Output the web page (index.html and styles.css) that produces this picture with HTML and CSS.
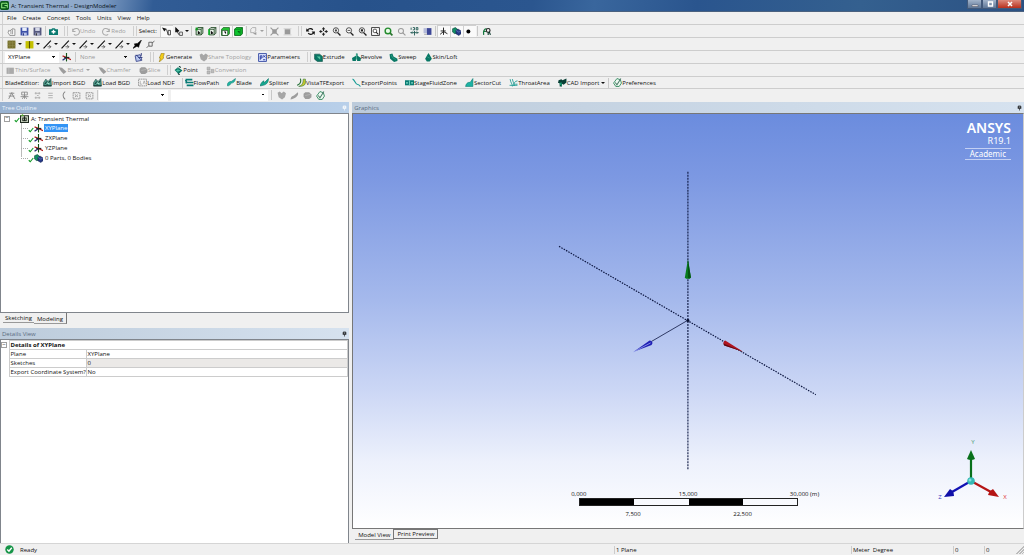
FILE: index.html
```html
<!DOCTYPE html>
<html lang="en">
<head>
<meta charset="utf-8">
<title>A: Transient Thermal - DesignModeler</title>
<link rel="stylesheet" href="styles.css">
</head>
<body>
<svg class="defs" aria-hidden="true">
  <symbol id="new" viewBox="0 0 16 16"><path d="M3 6l2 1 5-4 4 1v11H5l-3-5zM7 6v7M10 4v9" fill="#fff" stroke="#777" stroke-width="1.3"/></symbol>
  <symbol id="save" viewBox="0 0 16 16"><path d="M1 1h14v14H1z" fill="#3c50a8"/><path d="M4 1h8v6H4z" fill="#e8eefb"/><path d="M4 10h8v5H4z" fill="#b9c4ea"/><path d="M5 11h2v4H5z" fill="#26337c"/></symbol>
  <symbol id="saveas" viewBox="0 0 16 16"><path d="M1 1h14v14H1z" fill="#55597f"/><path d="M4 1h8v6H4z" fill="#d5d9e8"/><path d="M4 10h8v5H4z" fill="#a9aec8"/><path d="M5 11h2v4H5z" fill="#333"/></symbol>
  <symbol id="camera" viewBox="0 0 16 16"><path d="M0 4h4l2-2h4l2 2h4v10H0z" fill="#0a7a70"/><path d="M8 5v7M4.500 8.500h7" stroke="#fff" stroke-width="2.500"/></symbol>
  <symbol id="undo" viewBox="0 0 16 16"><path d="M3 3v5h5M3 8a6 6 0 1 1 2 5" fill="none" stroke="#aaa" stroke-width="1.800"/></symbol>
  <symbol id="redo" viewBox="0 0 16 16"><path d="M13 3v5H8M13 8a6 6 0 1 0-2 5" fill="none" stroke="#aaa" stroke-width="1.800"/></symbol>
  <symbol id="cursor" viewBox="0 0 16 16"><path d="M0 1l8 2-4 5z" fill="#111"/><path d="M8 4l3 10M11 6h4v8h-4z" fill="none" stroke="#333" stroke-width="1.500"/></symbol>
  <symbol id="cursor2" viewBox="0 0 16 16"><path d="M3 1l6 6-6 2zM5 7l4 7" fill="#111" stroke="#111" stroke-width="1.400"/><path d="M10 9h5v6h-5z" fill="none" stroke="#333" stroke-width="1.300"/></symbol>
  <symbol id="fpoint" viewBox="0 0 16 16"><path d="M2 4l3-3h9v10l-3 3H2zM2 4h9v10M11 4l3-3" fill="#dff0df" stroke="#163f1a" stroke-width="1.500"/><path d="M1 1v5h4V1z" fill="#119b22"/><path d="M5 6l5 5-2 1-3 1z" fill="#111"/></symbol>
  <symbol id="fedge" viewBox="0 0 16 16"><path d="M2 4l3-3h9v10l-3 3H2zM2 4h9v10M11 4l3-3" fill="#eef6ee" stroke="#163f1a" stroke-width="1.500"/><path d="M2 4v10" stroke="#0fb52a" stroke-width="3"/><path d="M5 6l5 5-2 1-3 1z" fill="#111"/></symbol>
  <symbol id="fface" viewBox="0 0 16 16"><path d="M1 4l3-3h11v11l-3 3H1z" fill="#25c936" stroke="#1a5a20" stroke-width="1.300"/><path d="M2 6h10v9H2z" fill="#fff" stroke="#163f1a" stroke-width="1.300"/><path d="M5 8l4 5V8z" fill="#111"/></symbol>
  <symbol id="fbody" viewBox="0 0 16 16"><path d="M1 4l3-3h11v11l-3 3H1z" fill="#0fc52e" stroke="#086618" stroke-width="1.500"/><path d="M1 4h11v11M12 4l3-3" fill="none" stroke="#086618"/><path d="M6 7l4 5V7z" fill="#056010"/></symbol>
  <symbol id="extend" viewBox="0 0 16 16"><path d="M3 4l3-3h6v6l-3 3H3z" fill="none" stroke="#aaa" stroke-width="1.500"/><path d="M7 12l6-3v5z" fill="#999"/></symbol>
  <symbol id="hatch" viewBox="0 0 16 16"><path d="M4 4h8v8H4z" fill="#999"/><path d="M1 1l4 4M15 1l-4 4M1 15l4-4M15 15l-4-4" stroke="#999" stroke-width="2"/></symbol>
  <symbol id="hatch2" viewBox="0 0 16 16"><path d="M3 4h10v9H3z" fill="#999"/><path d="M1 3h14M1 14h14" stroke="#bbb"/></symbol>
  <symbol id="rotate" viewBox="0 0 16 16"><path d="M3 6c1-4 7-4 9-1M13 10c-1 4-7 4-9 1" fill="none" stroke="#111" stroke-width="2.200"/><path d="M0 8h6L1 2zM16 8h-6l5 6z" fill="#111"/></symbol>
  <symbol id="pan" viewBox="0 0 16 16"><path d="M8 0l3 4H5zM8 16l3-4H5zM0 8l4-3v6zM16 8l-4-3v6zM7 4h2v3H7zM7 10h2v2H7zM4 7h2v2H4zM10 7h2v2h-2z" fill="#222"/></symbol>
  <symbol id="zoom" viewBox="0 0 16 16"><circle cx="7" cy="6" r="4.700" fill="#fff" stroke="#333" stroke-width="1.500"/><path d="M10 10l5 5" stroke="#222" stroke-width="2.500"/><path d="M7 3v6M5 6h4" stroke="#222" stroke-width="1.400"/></symbol>
  <symbol id="zoomout" viewBox="0 0 16 16"><circle cx="7" cy="6" r="4.700" fill="#fff" stroke="#333" stroke-width="1.500"/><path d="M10 10l5 5" stroke="#222" stroke-width="2.500"/><path d="M4.500 6h5" stroke="#222" stroke-width="1.400"/></symbol>
  <symbol id="zoomin" viewBox="0 0 16 16"><circle cx="7" cy="6" r="4.700" fill="#fff" stroke="#333" stroke-width="1.500"/><path d="M10 10l5 5" stroke="#222" stroke-width="2.500"/><path d="M5 4h4v4H5z" fill="#222"/></symbol>
  <symbol id="zoombox" viewBox="0 0 16 16"><path d="M1 1h14v14H1z" fill="#fff" stroke="#222" stroke-width="1.500"/><circle cx="7" cy="7" r="3.300" fill="none" stroke="#222" stroke-width="1.300"/><path d="M9 9l4 4" stroke="#222" stroke-width="2"/></symbol>
  <symbol id="zoomg" viewBox="0 0 16 16"><circle cx="7" cy="7" r="5" fill="#e9fbe9" stroke="#238b2d" stroke-width="2.500"/><path d="M11 11l4 4" stroke="#26712b" stroke-width="3"/></symbol>
  <symbol id="zoomd" viewBox="0 0 16 16"><circle cx="7" cy="7" r="4.500" fill="none" stroke="#999" stroke-width="1.800"/><path d="M10 10l5 5" stroke="#999" stroke-width="2"/></symbol>
  <symbol id="iso" viewBox="0 0 16 16"><path d="M2 1v4M5 1h3v4H5M11 1h3v4h-3zM1 10h14M8 7v8M4 8l-2 2 2 2M12 8l2 2-2 2" fill="none" stroke="#225b55" stroke-width="1.600"/></symbol>
  <symbol id="look" viewBox="0 0 16 16"><path d="M1 2h9v9H1z" fill="#b5bbd9"/><path d="M7 2h8v12H7z" fill="#3d4797"/><path d="M2 13h5" stroke="#777"/></symbol>
  <symbol id="axes" viewBox="0 0 16 16"><path d="M8 1v13M8 8l-6 5M8 8l7 4M3 7h9" stroke="#222" stroke-width="1.700"/></symbol>
  <symbol id="plane" viewBox="0 0 16 16"><path d="M8 0v15" stroke="#155519" stroke-width="2"/><path d="M8 8L1 13" stroke="#222b72" stroke-width="2.200"/><path d="M1 5l7 3 8 4" stroke="#b01c1c" stroke-width="2.200" fill="none"/><path d="M4 8h9" stroke="#222" stroke-width="2.200"/></symbol>
  <symbol id="cubes" viewBox="0 0 16 16"><path d="M1 3l5-2 4 3v6l-5 2-4-3z" fill="#139066" stroke="#093f36"/><path d="M7 6l4-2 5 3v5l-4 3-5-3z" fill="#263987" stroke="#101c4d"/><path d="M7 6l5 3 4-2" stroke="#7d91ce" fill="none"/></symbol>
  <symbol id="dot" viewBox="0 0 16 16"><circle cx="6" cy="8" r="3.500" fill="#000"/></symbol>
  <symbol id="inspect" viewBox="0 0 16 16"><path d="M3 14c-1-6 0-10 5-11M2 8h5" fill="none" stroke="#15753d" stroke-width="2.200"/><circle cx="11" cy="6" r="3.300" fill="none" stroke="#222" stroke-width="2"/><path d="M11 9v5M13 9l2 5" stroke="#0b382b" stroke-width="2"/></symbol>
  <symbol id="sqo" viewBox="0 0 16 16"><path d="M1 1h14v14H1z" fill="#77702d"/><path d="M1 5h14M1 10h14M5 1v14M10 1v14" stroke="#969051"/></symbol>
  <symbol id="sqy" viewBox="0 0 16 16"><path d="M1 2h14v13H1z" fill="#c4c000"/><path d="M7 2h2v13H7z" fill="#555000"/></symbol>
  <symbol id="edge" viewBox="0 0 16 16"><path d="M1 15L14 1" stroke="#111" stroke-width="2"/><path d="M8 12h6M11 9l3 3-3 3" fill="none" stroke="#444" stroke-width="1.300"/></symbol>
  <symbol id="edgeb" viewBox="0 0 16 16"><path d="M0 15l4-6-2-2 6-1 7-6-4 9-1 4-3-2z" fill="#000" stroke="#000"/></symbol>
  <symbol id="edgee" viewBox="0 0 16 16"><path d="M1 14l4-4M5 4h6v7H5zM11 5l4-3" fill="none" stroke="#555" stroke-width="1.500"/></symbol>
  <symbol id="newplane" viewBox="0 0 16 16"><path d="M2 5l9-2 3 10-10 2z" fill="#b9c8ef" stroke="#354187" stroke-width="1.500"/><path d="M4 3l8 9M8 8h7M13 0v5" stroke="#253179" stroke-width="1.500"/></symbol>
  <symbol id="bolt" viewBox="0 0 16 16"><path d="M8 0l5 1-2 6 1 2-8 7 2-7H4z" fill="#f4ce19" stroke="#8d741b"/></symbol>
  <symbol id="share" viewBox="0 0 16 16"><path d="M1 3l4-2 3 3 4-3 4 3-2 7-5 4-6-4z" fill="#a6a6a6"/></symbol>
  <symbol id="params" viewBox="0 0 16 16"><path d="M1 1h14v14H1z" fill="#dfe6ff" stroke="#3247a1" stroke-width="1.600"/><path d="M4 12V5h3v4H4M9 4l4 4M9 8l4-4M9 12h4" fill="none" stroke="#2438a0" stroke-width="1.700"/></symbol>
  <symbol id="extrude" viewBox="0 0 16 16"><path d="M1 2h9l5 4v9H6l-5-4z" fill="#087765" stroke="#07493f"/><path d="M5 6h6v6z" fill="#56c7a5"/></symbol>
  <symbol id="revolve" viewBox="0 0 16 16"><path d="M7 1h3v4l6 4-1 5H9v-4H7v4H1L0 9l7-4z" fill="#087765"/><path d="M8 2v10" stroke="#48b393" stroke-width="1.500"/></symbol>
  <symbol id="sweep" viewBox="0 0 16 16"><path d="M1 2l5-1 2 5 7 4v4l-6 2-7-6z" fill="#087765"/><path d="M4 3l2 5 6 4" fill="none" stroke="#48b393"/></symbol>
  <symbol id="skin" viewBox="0 0 16 16"><path d="M8 0l3 5 3 5-4 5H5l-3-5 3-5z" fill="#087765"/><path d="M6 7l4 2" stroke="#48b393"/></symbol>
  <symbol id="thin" viewBox="0 0 16 16"><path d="M1 3h13v11H1z" fill="#aaa"/><path d="M5 3v11" stroke="#ccc"/></symbol>
  <symbol id="blend" viewBox="0 0 16 16"><path d="M1 2l6 1 8 7-5 4-5-5z" fill="#9d9d9d"/></symbol>
  <symbol id="gblade" viewBox="0 0 16 16"><path d="M1 14c1-4 3-5 6-6l7-6c2 5-3 11-13 13z" fill="#9d9d9d"/></symbol>
  <symbol id="slice" viewBox="0 0 16 16"><path d="M1 5l3-3h7l4 4v5l-4 3H4l-3-4z" fill="#9d9d9d"/><path d="M4 8l9-2" stroke="#c4c4c4"/></symbol>
  <symbol id="point" viewBox="0 0 16 16"><path d="M1 7l6-5 8 6-7 6z" fill="#087765"/><path d="M7 4v7M4 8h7" stroke="#54c8aa" stroke-width="1.500"/><path d="M9 0l3 3M7 13l3 3" stroke="#173f39" stroke-width="2"/></symbol>
  <symbol id="convert" viewBox="0 0 16 16"><path d="M2 2h5v5H2zM2 9h5v5H2zM9 6h5v6H9z" fill="#bdbdbd" stroke="#999"/></symbol>
  <symbol id="bgd" viewBox="0 0 16 16"><path d="M1 8l4-6 4 4 5-5 1 13H1z" fill="#4d9c8c" stroke="#173d38"/><path d="M1 14h14M3 11l4-5M7 12l6-7" stroke="#0a2925" stroke-width="1.700"/><path d="M7 9l4 1" stroke="#a7e1cf" stroke-width="2"/></symbol>
  <symbol id="ndf" viewBox="0 0 16 16"><path d="M1 2h14v12H1z" fill="#f5f5f5" stroke="#888" stroke-width="1.500" stroke-dasharray="3 1"/><path d="M4 5v6h3M9 11l2-6 2 6" stroke="#888" fill="none"/></symbol>
  <symbol id="flow" viewBox="0 0 16 16"><path d="M1 3h12M3 8h12M3 13h12M1 3l2 5-2 1" fill="none" stroke="#087b75" stroke-width="3"/></symbol>
  <symbol id="blade" viewBox="0 0 16 16"><path d="M1 14C0 8 4 6 8 6l7-5c-1 7-5 8-8 8-1 3-3 5-6 5z" fill="#20b8a5" stroke="#08786e"/></symbol>
  <symbol id="splitter" viewBox="0 0 16 16"><path d="M0 14c2-5 3-7 7-9v4l8-8c0 8-4 12-15 13z" fill="#16a990" stroke="#087064"/></symbol>
  <symbol id="vista" viewBox="0 0 16 16"><path d="M6 1c2 7 0 10-6 12" fill="none" stroke="#29733a" stroke-width="2"/><path d="M3 15c6-2 8-5 8-13h4v7c-1 5-6 6-12 6z" fill="#c6c82d" stroke="#2d732e"/></symbol>
  <symbol id="expoints" viewBox="0 0 16 16"><path d="M1 2c4 1 5 9 8 9 3 0 4 1 6 4" fill="none" stroke="#149b93" stroke-width="2"/></symbol>
  <symbol id="stage" viewBox="0 0 16 16"><path d="M0 4h16v9H0z" fill="#087c73"/><path d="M7 4h2v9H7zM2 7h3v3H2zM11 7h3v3h-3z" fill="#71cabb"/></symbol>
  <symbol id="sector" viewBox="0 0 16 16"><path d="M1 15C2 9 6 7 9 8l5-7v14z" fill="#1cb3a4" stroke="#08776d"/></symbol>
  <symbol id="throat" viewBox="0 0 16 16"><path d="M2 2c1 7 4 8 4 13M6 2c1 5 3 7 3 12M15 5c-5 1-6 3-6 9M15 11h-4M1 13h14" fill="none" stroke="#159990" stroke-width="1.500"/></symbol>
  <symbol id="cad" viewBox="0 0 16 16"><path d="M1 4l5-2 2 2 7-3v7l-5 4-3-2v5H3V9H0z" fill="#093f35"/><path d="M2 10l4-3 1 8" fill="#18a176"/></symbol>
  <symbol id="prefs" viewBox="0 0 16 16"><path d="M7 1l6 2 2 6-4 6H5L1 9z" fill="#eefaf2" stroke="#268355" stroke-width="1.500"/><path d="M4 8l3 4 7-11" fill="none" stroke="#4c7a69" stroke-width="1.800"/></symbol>
  <symbol id="g0" viewBox="0 0 16 16"><path d="M4 4h9M3 9h10M9 2L3 14M9 5l5 9" fill="none" stroke="#888" stroke-width="1.600"/></symbol>
  <symbol id="g1" viewBox="0 0 16 16"><path d="M3 2h10v5H3zM1 10h14M8 2v12M4 14l4-6 4 6" fill="none" stroke="#888" stroke-width="1.500"/></symbol>
  <symbol id="g2" viewBox="0 0 16 16"><path d="M4 4h8M4 8h8M4 12h8" stroke="#aaa" stroke-width="1.500"/></symbol>
  <symbol id="g2x" viewBox="0 0 16 16"><path d="M3 4h10M3 12h10M5 2v4M11 2v4M5 10v4M11 10v4M7 8h3" stroke="#aaa" stroke-width="1.500"/></symbol>
  <symbol id="g3" viewBox="0 0 16 16"><path d="M11 1c-5 3-5 10 0 14" fill="none" stroke="#888" stroke-width="1.800"/></symbol>
  <symbol id="g4" viewBox="0 0 16 16"><path d="M2 3h12v11H2zM5 6l6 5M5 11l6-5" fill="none" stroke="#888" stroke-width="1.500" stroke-dasharray="3 1"/></symbol>
  <symbol id="pin" viewBox="0 0 8 8"><path d="M2 1h4v3H2z" fill="none" stroke="currentColor" stroke-width="1.500"/><path d="M1 4.500h6M4 5v3" stroke="currentColor"/></symbol>
  <symbol id="check" viewBox="0 0 8 8"><path d="M1 5l2 2 4-5" fill="none" stroke="#139b25" stroke-width="1.500"/></symbol>
  <symbol id="root" viewBox="0 0 16 16"><path d="M1 3h14v12H1z" fill="#dce6d2" stroke="#202a20" stroke-width="2"/><path d="M5 12V7h6v5zM8 4v8" stroke="#171f17" fill="none" stroke-width="1.800"/><path d="M1 3l4-3 2 4" fill="#58b131"/></symbol>
</svg>

<div class="app">
  <header class="title">
    <svg class="app-icon" viewBox="0 0 16 16"><rect width="16" height="16" rx="3" fill="#0b5a1b"/><path d="M3 4h7M3 4v8h7M8 8h5v4M10 3l4 3" fill="none" stroke="#8be27b" stroke-width="2"/></svg>
    <h1>A: Transient Thermal - DesignModeler</h1>
    <div class="win">
      <button aria-label="Minimize"><svg viewBox="0 0 10 8"><path d="M2 5h6v1.500H2z" fill="#fff" stroke="#445" stroke-width=".5"/></svg></button>
      <button aria-label="Restore"><svg viewBox="0 0 10 8"><path d="M3.500 2h4v4h-4z" fill="none" stroke="#fff" stroke-width="1.400"/></svg></button>
      <button class="close" aria-label="Close"><svg viewBox="0 0 10 8"><path d="M3 2l4 4M7 2L3 6" stroke="#fff" stroke-width="1.500"/></svg></button>
    </div>
  </header>

  <nav class="bar menu"><button>File</button><button>Create</button><button>Concept</button><button>Tools</button><button>Units</button><button>View</button><button>Help</button></nav>

  <div class="bar">
    <button class="i" aria-label="New"><svg><use href="#new"/></svg></button><button class="i" aria-label="Save"><svg><use href="#save"/></svg></button><button class="i" aria-label="Save as"><svg><use href="#saveas"/></svg></button><hr>
    <button class="i" aria-label="Capture"><svg><use href="#camera"/></svg></button><hr class="dbl">
    <div class="set"><button class="t" disabled><svg><use href="#undo"/></svg>Undo</button><button class="t" disabled><svg><use href="#redo"/></svg>Redo</button></div><hr class="dbl far">
    <span class="lead">Select:</span>
    <button class="i on" aria-label="Single select"><svg><use href="#cursor"/></svg></button><button class="i d" aria-label="Select mode"><svg><use href="#cursor2"/></svg></button><hr>
    <button class="i" aria-label="Points"><svg><use href="#fpoint"/></svg></button><button class="i" aria-label="Edges"><svg><use href="#fedge"/></svg></button><button class="i on" aria-label="Faces"><svg><use href="#fface"/></svg></button><button class="i on" aria-label="Bodies"><svg><use href="#fbody"/></svg></button><hr>
    <button class="i d" disabled aria-label="Extend"><svg><use href="#extend"/></svg></button><hr>
    <button class="i" disabled aria-label="Expand"><svg><use href="#hatch"/></svg></button><button class="i" disabled aria-label="Shrink"><svg><use href="#hatch2"/></svg></button><hr class="dbl">
    <button class="i" aria-label="Rotate"><svg><use href="#rotate"/></svg></button><button class="i" aria-label="Pan"><svg><use href="#pan"/></svg></button><button class="i" aria-label="Zoom"><svg><use href="#zoom"/></svg></button><button class="i" aria-label="Zoom out"><svg><use href="#zoomout"/></svg></button><button class="i" aria-label="Box zoom"><svg><use href="#zoomin"/></svg></button><button class="i" aria-label="Zoom window"><svg><use href="#zoombox"/></svg></button><button class="i" aria-label="Zoom to fit"><svg><use href="#zoomg"/></svg></button><button class="i" aria-label="Magnifier"><svg><use href="#zoomd"/></svg></button><button class="i" aria-label="ISO view"><svg><use href="#iso"/></svg></button><button class="i" aria-label="Look at"><svg><use href="#look"/></svg></button><hr>
    <button class="i on" aria-label="Display plane"><svg><use href="#axes"/></svg></button><button class="i on" aria-label="Display model"><svg><use href="#cubes"/></svg></button><button class="i on" aria-label="Display points"><svg><use href="#dot"/></svg></button><hr>
    <button class="i wide" aria-label="Inspect"><svg><use href="#inspect"/></svg></button>
  </div>

  <div class="bar">
    <button class="i e" aria-label="Face color"><svg><use href="#sqo"/></svg></button><button class="i e" aria-label="Edge color"><svg><use href="#sqy"/></svg></button><button class="i e" aria-label="Free edges"><svg><use href="#edge"/></svg></button><button class="i e" aria-label="Single edges"><svg><use href="#edge"/></svg></button><button class="i e" aria-label="Double edges"><svg><use href="#edge"/></svg></button><button class="i e" aria-label="Triple edges"><svg><use href="#edge"/></svg></button><button class="i e" aria-label="Multiple edges"><svg><use href="#edge"/></svg></button><button class="i" aria-label="Edge direction"><svg><use href="#edgeb"/></svg></button><button class="i" aria-label="Vertices"><svg><use href="#edgee"/></svg></button>
  </div>

  <div class="bar">
    <select class="c1" aria-label="Active plane"><option>XYPlane</option></select>
    <button class="i wide" aria-label="New plane"><svg><use href="#plane"/></svg></button><hr>
    <select class="c1" aria-label="Active sketch" disabled><option>None</option></select>
    <button class="i wide" aria-label="New sketch"><svg><use href="#newplane"/></svg></button><hr class="dbl">
    <div class="set"><button class="t"><svg><use href="#bolt"/></svg>Generate</button><button class="t" disabled><svg><use href="#share"/></svg>Share Topology</button><button class="t"><svg><use href="#params"/></svg>Parameters</button></div><hr class="dbl far">
    <div class="set"><button class="t"><svg><use href="#extrude"/></svg>Extrude</button><button class="t"><svg><use href="#revolve"/></svg>Revolve</button><button class="t"><svg><use href="#sweep"/></svg>Sweep</button><button class="t"><svg><use href="#skin"/></svg>Skin/Loft</button></div>
  </div>

  <div class="bar roomy">
    <div class="set"><button class="t" disabled><svg><use href="#thin"/></svg>Thin/Surface</button><button class="t d" disabled><svg><use href="#blend"/></svg>Blend</button><button class="t" disabled><svg><use href="#blend"/></svg>Chamfer</button><button class="t" disabled><svg><use href="#slice"/></svg>Slice</button></div><hr class="dbl far">
    <div class="set"><button class="t"><svg><use href="#point"/></svg>Point</button><button class="t" disabled><svg><use href="#convert"/></svg>Conversion</button></div>
  </div>

  <div class="bar roomy blade">
    <span class="lead">BladeEditor:</span>
    <div class="set"><button class="t"><svg><use href="#bgd"/></svg>Import BGD</button><button class="t"><svg><use href="#bgd"/></svg>Load BGD</button><button class="t"><svg><use href="#ndf"/></svg>Load NDF</button></div><hr class="far">
    <div class="set"><button class="t"><svg><use href="#flow"/></svg>FlowPath</button><button class="t"><svg><use href="#blade"/></svg>Blade</button><button class="t"><svg><use href="#splitter"/></svg>Splitter</button><button class="t"><svg><use href="#vista"/></svg>VistaTFExport</button><button class="t"><svg><use href="#expoints"/></svg>ExportPoints</button><button class="t"><svg><use href="#stage"/></svg>StageFluidZone</button><button class="t"><svg><use href="#sector"/></svg>SectorCut</button><button class="t"><svg><use href="#throat"/></svg>ThroatArea</button><button class="t d"><svg><use href="#cad"/></svg>CAD Import</button></div><hr class="end">
    <button class="t"><svg><use href="#prefs"/></svg>Preferences</button>
  </div>

  <div class="bar last">
    <button class="i" disabled aria-label="Section"><svg><use href="#g0"/></svg></button><button class="i" disabled aria-label="Hub"><svg><use href="#g1"/></svg></button><button class="i" disabled aria-label="Layer"><svg><use href="#g2x"/></svg></button><button class="i" disabled aria-label="Lines"><svg><use href="#g2"/></svg></button><button class="i" disabled aria-label="Curve"><svg><use href="#g3"/></svg></button><button class="i" disabled aria-label="Grid"><svg><use href="#g4"/></svg></button><button class="i" disabled aria-label="Mesh"><svg><use href="#g4"/></svg></button><hr>
    <select class="c2" aria-label="Blade row"><option></option></select><select class="c3" aria-label="Blade layer"><option></option></select><hr class="end">
    <button class="i" disabled aria-label="Flow"><svg><use href="#share"/></svg></button><button class="i" disabled aria-label="Blade"><svg><use href="#gblade"/></svg></button><button class="i" disabled aria-label="Body"><svg><use href="#slice"/></svg></button><button class="i" aria-label="Blade preferences"><svg><use href="#prefs"/></svg></button>
  </div>

  <main>
    <aside>
      <section class="pane outline">
        <h2 class="active">Tree Outline<svg><use href="#pin"/></svg></h2>
        <div class="tree">
          <div class="node"><button class="box" aria-label="Collapse">−</button><svg class="ck"><use href="#check"/></svg><svg class="ic"><use href="#root"/></svg><span>A: Transient Thermal</span></div>
          <ul>
            <li class="node"><svg class="ck"><use href="#check"/></svg><svg class="ic"><use href="#plane"/></svg><span class="sel">XYPlane</span></li>
            <li class="node"><svg class="ck"><use href="#check"/></svg><svg class="ic"><use href="#plane"/></svg><span>ZXPlane</span></li>
            <li class="node"><svg class="ck"><use href="#check"/></svg><svg class="ic"><use href="#plane"/></svg><span>YZPlane</span></li>
            <li class="node"><svg class="ck"><use href="#check"/></svg><svg class="ic"><use href="#cubes"/></svg><span>0 Parts, 0 Bodies</span></li>
          </ul>
        </div>
        <div class="tabs"><button>Sketching</button><button class="cur">Modeling</button></div>
      </section>
      <section class="pane details">
        <h2>Details View<svg><use href="#pin"/></svg></h2>
        <div class="sheet">
          <table>
            <colgroup><col class="gut-col"><col class="key-col"><col></colgroup>
            <tr><td class="gut"><button class="box" aria-label="Collapse">−</button></td><th colspan="2">Details of XYPlane</th></tr>
            <tr><td class="gut"></td><td>Plane</td><td>XYPlane</td></tr>
            <tr><td class="gut"></td><td>Sketches</td><td class="ro">0</td></tr>
            <tr><td class="gut"></td><td>Export Coordinate System?</td><td>No</td></tr>
          </table>
        </div>
      </section>
    </aside>

    <section class="pane graphics">
      <h2>Graphics<svg><use href="#pin"/></svg></h2>
      <div class="canvas">
        <svg class="scene" viewBox="0 0 671 416">
          <g stroke="#0c1640" fill="none"><path d="M335.500 58v299" stroke-dasharray="2 1" stroke-width="1.100"/><path d="M206 133l258 149" stroke-dasharray="1.500 1.200" stroke-width="1.200"/><path d="M335 207.500l-36 21" stroke-width=".8"/></g>
          <path d="M335.500 146l-3 18 1 1.500h4l1-1.500z" fill="#087c1d"/><path d="M335.500 146v19h2l1-1z" fill="#045311"/>
          <path d="M391 239l-18-11.500-1 .5-1 2 1 2.500z" fill="#b01420"/><path d="M391 239l-19-6.500-1-2z" fill="#590911"/>
          <path d="M281 239l16-11.500 2 .5 1 2-1 2z" fill="#2020b5"/><path d="M281 239l17-9" stroke="#9aa6ef" stroke-width=".8"/>
          <circle cx="335.500" cy="207.500" r="1.500" fill="#071033"/>
        </svg>
        <div class="brand"><strong>ANSYS</strong><span>R19.1</span><em>Academic</em></div>
        <div class="scale">
          <div class="nums"><span>0,000</span><span>15,000</span><span>30,000 (m)</span></div>
          <div class="rule"><i></i><i></i><i></i><i></i></div>
          <div class="nums low"><span>7,500</span><span>22,500</span></div>
        </div>
        <svg class="triad" viewBox="0 0 72 70">
          <g stroke-width="2.200"><path d="M35 43V19" stroke="#08701b"/><path d="M35 43L16 54" stroke="#1212b4"/><path d="M35 43l20 11" stroke="#b51515"/></g>
          <path d="M35 12l-4 9q4 2 8 0z" fill="#08701b"/><path d="M8 59l6-8q4 2 4 7z" fill="#1010a8"/><path d="M63 59l-6-8q-4 2-5 6z" fill="#b41414"/>
          <circle cx="35" cy="43" r="3.800" fill="#35b8b4"/><circle cx="34" cy="42" r="1.500" fill="#80e1dc"/>
          <text x="37" y="6" fill="#4a9a75">Y</text><text x="4" y="61" fill="#3434bc">Z</text><text x="69" y="61" fill="#d33">X</text>
        </svg>
      </div>
      <div class="tabs"><button class="cur">Model View</button><button class="out">Print Preview</button></div>
    </section>
  </main>

  <footer>
    <svg viewBox="0 0 16 16"><circle cx="8" cy="8" r="7.500" fill="#159447"/><path d="M4 8l3 3 5-6" fill="none" stroke="#fff" stroke-width="2.500"/></svg>
    <span class="ready">Ready</span><span class="cell count">1 Plane</span><span class="cell unit">Meter&nbsp; Degree</span><span class="cell num">0</span><span class="cell num">0</span><span class="grip"></span>
  </footer>
</div>
</body>
</html>
```
FILE: styles.css
```css
* { box-sizing: border-box; }
body { margin: 0; font: 6px/8px "Open Sans", "Noto Sans", sans-serif; color: #111; background: #f0f0f0; }
button, select { font: inherit; color: inherit; background: none; border: 0; padding: 0; margin: 0; border-radius: 0; }
.defs { position: absolute; width: 0; height: 0; }
.app { display: flex; flex-direction: column; height: 100vh; min-height: 400px; overflow: hidden; }

.title { display: flex; align-items: center; flex: none; height: 12px; gap: 2px;
  background: linear-gradient(100deg, #9fb6d3 0, #8aa6c9 9%, #5f82b0 12%, #315c95 15%, #27528b 35%, #2b568f 52%, #39669d 58%, #2a558e 68%, #34608f 84%, #2b5183 100%);
  border-bottom: 1px solid #4b6280; }
.title h1 { margin: 0; flex: 1; font: 6px/10px "Open Sans", sans-serif; color: #0a1420; }
.app-icon { width: 9px; height: 9px; }
.win { display: flex; align-self: flex-start; margin-right: 2px; }
.win button { display: flex; width: 15px; height: 9px; justify-content: center; background: linear-gradient(#a3b4cb, #5f7797); border: 1px solid #42597a; border-top: 0; }
.win .close { width: 25px; background: linear-gradient(#dc8a7c, #b8301d); }
.win svg { width: 10px; height: 8px; }

.bar { display: flex; align-items: center; flex: none; height: 13px; padding-left: 5px; border-bottom: 1px solid #cdcdcd; background: #f0f0f0; white-space: nowrap; box-shadow: inset 2px 0 #f0f0f0, inset 3px 0 #d2d2d2; }
.bar.blade { height: 12px; }
.bar.last { border-bottom-color: #f0f0f0; }
.bar hr { width: 1px; height: 10px; margin: 0 1px; border: 0; background: #c8c8c8; }
.bar hr.dbl { width: 4px; margin: 0 2px 0 4px; border: solid #cfcfcf; border-width: 0 1px; background: none; }
.bar hr.far { margin-left: 7px; }
.bar hr.end { margin: 0 3px; }
.lead { padding-right: 3px; }
.menu { gap: 6px; padding-left: 7px; }
.set { display: flex; gap: 7px; }
.roomy .set { gap: 8px; }
.i { display: flex; align-items: center; justify-content: center; width: 13px; height: 12px; flex: none; }
.i svg { width: 9px; height: 9px; flex: none; }
.wide { width: 15px; }
.on { background: #fafafa; border: 1px solid #d0d0d0; border-width: 1px 0 0 1px; }
.e { width: 18px; }
.d::after, .e::after { content: ""; border: 2px solid transparent; border-top-color: currentColor; border-bottom: 0; margin-left: 2px; }
.i.d { width: 17px; }
.t { display: flex; align-items: center; height: 12px; }
.t svg { width: 9px; height: 9px; flex: none; }
button:disabled { color: #a0a0a0; }
.set, .bar > .t { margin-left: 1px; }
select { appearance: none; height: 11px; padding: 0 3px; }
.bar select { background: linear-gradient(to bottom right, #111 50%, transparent 50%) no-repeat right 3px center / 2px 2px, linear-gradient(to bottom left, #111 50%, transparent 50%) no-repeat right 5px center / 2px 2px, #fff; }
.bar select:disabled { background-color: #f0f0f0; color: #999; opacity: 1; }
.c1 { width: 54px; }
.bar .c2 { width: 69px; margin-right: 3px; }
.bar .c3 { width: 97px; }

main { display: flex; flex: 1; min-height: 0; gap: 3px; }
aside { display: flex; flex-direction: column; gap: 3px; flex: 0 0 34.1%; min-width: 0; }
.pane { display: flex; flex-direction: column; min-height: 0; }
.outline { flex: 0 0 223px; }
.details, .graphics { flex: 1; min-width: 0; }
h2 { display: flex; justify-content: space-between; align-items: center; flex: none; height: 11px; margin: 0; padding: 0 2px; font: 6px/10px "Open Sans", sans-serif; color: #5a6b80; background: linear-gradient(90deg, #bccbdb, #d6e2ef); }
h2 svg { width: 5px; height: 6px; color: #111; }
h2.active { color: #e9f2fb; background: linear-gradient(90deg, #98b2d1, #b9d0ea); }
h2.active svg { color: #fff; }
.tree, .sheet { flex: 1; background: #fff; border: 1px solid #80858c; min-height: 0; }
.sheet { border-bottom: 0; }
.tree { padding-left: 3px; }
.node { display: flex; align-items: center; height: 10px; }
.tree > .node { height: 9px; }
.node span { padding: 0 1px; }
.ck { width: 6px; height: 7px; align-self: flex-end; }
.ic { width: 9px; height: 9px; margin-right: 1px; }
.box { display: flex; align-items: center; justify-content: center; width: 6px; height: 6px; line-height: 5px; border: 1px solid #a0a0a0; background: #fff; }
.tree > .node .box { margin-right: 4px; }
.tree ul { list-style: none; margin: 0 0 0 17px; padding: 0; width: max-content; background: linear-gradient(#bbb, #bbb) no-repeat 0 0 / 1px 34px; }
.tree li::before { content: ""; width: 7px; border-top: 1px dotted #aaa; }
.node .sel { background: #3394f5; color: #fff; }
.tabs { display: flex; flex: none; height: 12px; padding-left: 3px; align-items: flex-start; background: #f0f0f0; }
.graphics .tabs { height: 14px; }
.tabs button { height: 10px; padding: 0 2px; border-bottom: 1px solid #999; }
.tabs .cur { height: 11px; padding: 1px 3px 0; border-right: 1px solid #777; }
.tabs .out { border: 1px solid #777; border-left: 0; padding: 0 3px; }

table { width: 100%; border-collapse: collapse; table-layout: fixed; }
td, th { height: 9px; padding: 0 1px; border: 1px solid #ccc; text-align: left; line-height: 8px; overflow: hidden; white-space: nowrap; }
table tr > :first-child { border-left: 0; }
.gut { border-bottom: 0; border-top: 0; padding: 0; }
.gut-col { width: 8px; }
.key-col { width: 77px; }
.ro { background: #ebe9e7; }

.canvas { position: relative; flex: 1; min-height: 0; border: 1px solid #777; border-right-color: #ccc; background: linear-gradient(#6b8cde 0, #7c98e2 15%, #a5b9ec 45%, #ccd7f5 67%, #edf1fc 84%, #fff 100%); }
.scene { position: absolute; inset: 0; width: 100%; height: 100%; }
.brand { position: absolute; top: 6px; right: 12px; display: flex; flex-direction: column; align-items: flex-end; color: #fff; font-family: "Noto Sans", sans-serif; }
.brand strong { font-size: 14px; line-height: 16px; font-weight: 600; }
.brand span { font-size: 9px; line-height: 9px; }
.brand em { margin-top: 3px; padding: 0 5px; font: 8px/10px "Noto Sans", sans-serif; border: solid #c3d0f4; border-width: 1px 0; }
.scale { position: absolute; left: 226px; bottom: 10px; width: 219px; }
.nums { position: relative; display: flex; justify-content: space-between; margin: 0 -21px 0 -8px; }
.rule { display: flex; height: 8px; border: 1px solid #222; }
.rule i { flex: 1; }
.rule i:nth-child(odd) { background: #000; }
.low { justify-content: space-around; margin: 4px 0 0; }
.triad { position: absolute; right: 15px; bottom: 20px; width: 72px; height: 70px; overflow: visible; }
.triad text { font: 6px "Open Sans", sans-serif; text-anchor: middle; }

footer { display: flex; align-items: center; flex: none; height: 12px; padding-left: 5px; border-top: 1px solid #d5d5d5; background: #f0f0f0; }
footer svg { width: 9px; height: 9px; }
.ready { flex: 0 0 600px; padding-left: 6px; }
.cell { border-left: 1px solid #ccc; padding-left: 1px; }
.count { flex: 1; }
.unit { width: 102px; }
.num { width: 31px; }
.grip { width: 9px; height: 9px; background: repeating-linear-gradient(135deg, transparent 0 1px, #bbb 1px 2px); clip-path: polygon(100% 0, 100% 100%, 0 100%); }
```
